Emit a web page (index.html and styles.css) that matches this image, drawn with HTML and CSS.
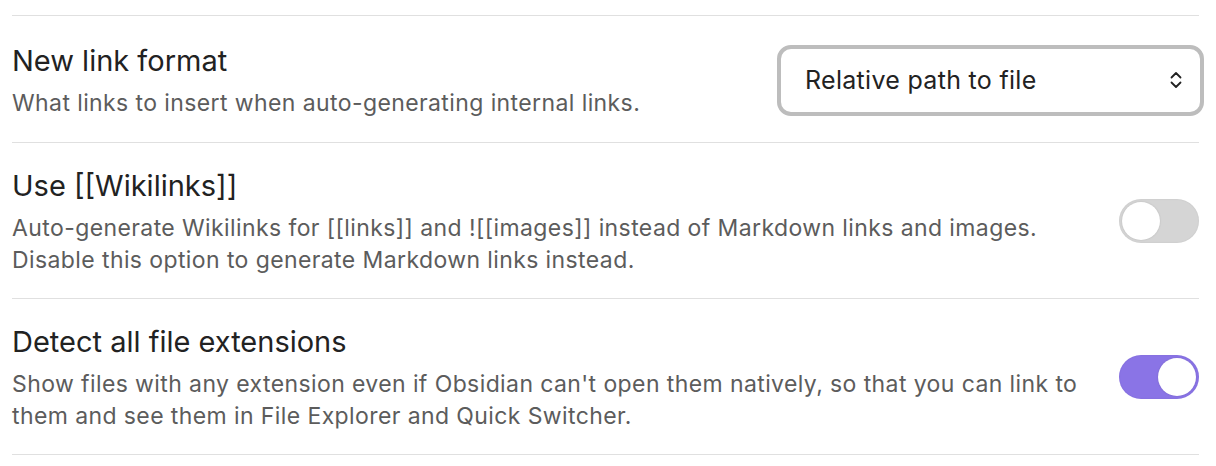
FILE: index.html
```html
<!DOCTYPE html>
<html lang="en">
<head>
<meta charset="utf-8">
<title>Files and links</title>
<link rel="stylesheet" href="styles.css">
</head>
<body>
<div class="settings">
  <div class="setting-item setting-item-first">
    <div class="setting-info">
      <div class="setting-name">New link format</div>
      <div class="setting-desc">What links to insert when auto-generating internal links.</div>
    </div>
    <div class="setting-control">
      <div class="dropdown">
        <span class="dropdown-value">Relative path to file</span>
        <svg class="dropdown-icon" width="14" height="20" viewBox="0 0 14 20" fill="none" stroke="#222" stroke-width="1.8" stroke-linecap="round" stroke-linejoin="round"><path d="M2.5 7.5 L7 3 L11.5 7.5"/><path d="M2.5 12.5 L7 17 L11.5 12.5"/></svg>
      </div>
    </div>
  </div>
  <div class="setting-item">
    <div class="setting-info">
      <div class="setting-name">Use [[Wikilinks]]</div>
      <div class="setting-desc">Auto-generate Wikilinks for [[links]] and ![[images]] instead of Markdown links and images.<br>Disable this option to generate Markdown links instead.</div>
    </div>
    <div class="setting-control">
      <div class="toggle"><div class="knob"></div></div>
    </div>
  </div>
  <div class="setting-item">
    <div class="setting-info">
      <div class="setting-name">Detect all file extensions</div>
      <div class="setting-desc">Show files with any extension even if Obsidian can't open them natively, so that you can link to<br>them and see them in File Explorer and Quick Switcher.</div>
    </div>
    <div class="setting-control">
      <div class="toggle is-on"><div class="knob"></div></div>
    </div>
  </div>
</div>
</body>
</html>
```
FILE: styles.css
```css
html, body {
  margin: 0;
  padding: 0;
  background: #ffffff;
}
body {
  font-family: Inter, "Noto Sans", "Liberation Sans", sans-serif;
  color: #222222;
}
.settings {
  padding: 15px 17px 0 12px;
}
.setting-item {
  display: flex;
  align-items: center;
  border-top: 1px solid #e0e0e0;
  padding: 23px 0 22px;
}
.setting-item-first {
  padding: 25px 0 23px;
}
.setting-item:last-child {
  border-bottom: 1px solid #e0e0e0;
}
.setting-info {
  flex: 1;
  min-width: 0;
  margin-right: 24px;
}
.setting-name {
  font-size: 29px;
  line-height: 40px;
  color: #222222;
}
.setting-desc {
  margin-top: 6px;
  font-size: 23px;
  line-height: 32px;
  letter-spacing: 0.4px;
  color: #5c5c5c;
  white-space: nowrap;
}
.setting-control {
  display: flex;
  align-items: center;
  justify-content: flex-end;
}
.dropdown {
  box-sizing: border-box;
  width: 427px;
  height: 71px;
  margin-right: -5px;
  border: 4px solid #bdbdbd;
  border-radius: 14px;
  background: #ffffff;
  display: flex;
  align-items: center;
  justify-content: space-between;
  padding: 0 17px 0 24px;
}
.dropdown-value {
  font-size: 25px;
  letter-spacing: 0.3px;
  color: #222222;
}
.dropdown-icon {
  display: block;
}
.toggle {
  box-sizing: border-box;
  width: 80px;
  height: 44px;
  border-radius: 22px;
  background: #d5d5d5;
  padding: 3px;
  display: flex;
  justify-content: flex-start;
  box-shadow: inset 0 0 2px rgba(0,0,0,0.08);
}
.toggle.is-on {
  background: #8a74e6;
  justify-content: flex-end;
}
.knob {
  width: 38px;
  height: 38px;
  border-radius: 50%;
  background: #ffffff;
  box-shadow: 0 0 2px rgba(0,0,0,0.15);
}
```
